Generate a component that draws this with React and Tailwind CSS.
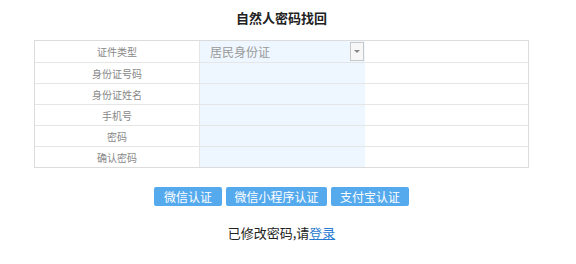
const rows = [
  { label: "证件类型", select: true },
  { label: "身份证号码" },
  { label: "身份证姓名" },
  { label: "手机号" },
  { label: "密码" },
  { label: "确认密码" },
];

export default function App() {
  return (
    <div className="h-[264px] w-[576px] bg-white font-['Noto_Sans_CJK_SC',sans-serif]">
      <div className="w-[563px]">
        <h1 className="pt-[9px] text-center text-[13px] font-bold leading-[18px] text-[#222]">自然人密码找回</h1>
        <div className="ml-[34px] mt-[13px] w-[495px] border border-[#dcdcdc]">
          {rows.map((row, i) => (
            <div key={row.label} className={`flex h-[21px] ${i > 0 ? "border-t border-[#e6e6e6]" : ""}`}>
              <div className="flex w-[165px] items-center justify-center border-r border-[#e6e6e6] text-[10px] text-[#888]">
                {row.label}
              </div>
              <div className="relative flex w-[165px] items-center bg-[#eef6ff]">
                {row.select && (
                  <>
                    <span className="pl-[10px] text-[12px] text-[#999]">居民身份证</span>
                    <span className="absolute right-[1px] top-[1px] flex h-[19px] w-[14px] items-center justify-center border border-[#c8c8c8] bg-[#f7f7f7]">
                      <span className="h-0 w-0 border-x-[3px] border-t-[3px] border-x-transparent border-t-[#888]" />
                    </span>
                  </>
                )}
              </div>
              <div className="flex-1" />
            </div>
          ))}
        </div>
        <div className="mt-[19px] flex justify-center gap-[4px] text-[12px] text-white">
          <button className="h-[19px] w-[68px] rounded-[2px] bg-[#55aaee]">微信认证</button>
          <button className="h-[19px] w-[101px] rounded-[2px] bg-[#55aaee]">微信小程序认证</button>
          <button className="h-[19px] w-[78px] rounded-[2px] bg-[#55aaee]">支付宝认证</button>
        </div>
        <p className="mt-[18px] text-center text-[13px] leading-[18px] text-[#222]">
          已修改密码,请<a className="text-[#2a7ad0] underline">登录</a>
        </p>
      </div>
    </div>
  );
}
